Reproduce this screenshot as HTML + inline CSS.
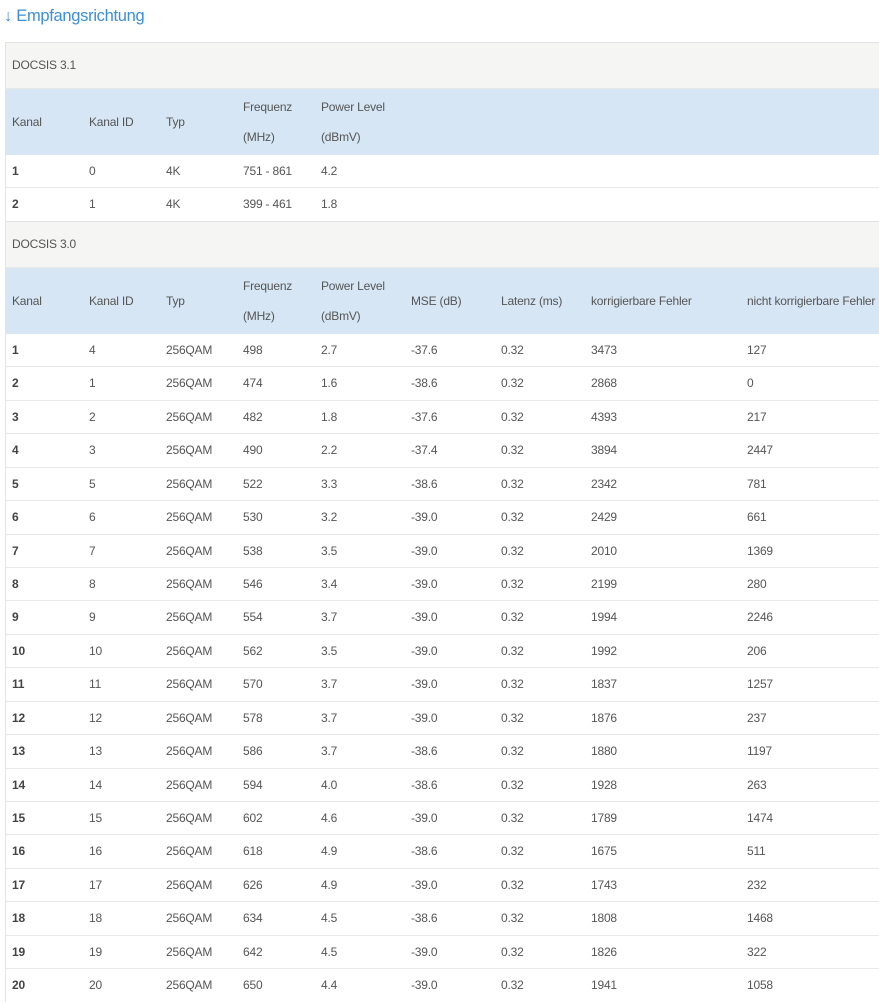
<!DOCTYPE html>
<html><head><meta charset="utf-8"><style>
body{margin:0;background:#fff;font-family:"Liberation Sans",sans-serif;font-size:12px;letter-spacing:-0.2px;color:#555;width:879px;height:999px;overflow:hidden;position:relative}
h2{position:absolute;left:4px;top:7px;margin:0;font-weight:normal;font-size:16.5px;letter-spacing:-0.3px;color:#3a8fd6}
.box{position:absolute;left:5px;top:42px;width:900px;border-left:1px solid #e4e4e4;border-top:1px solid #e4e4e4}
.sec{height:45px;background:#f5f5f3;line-height:45px;padding-left:6px;border-bottom:1px solid #e8e8e6}
.hd{background:#d6e6f4;height:66px;position:relative}
.r{height:32.45px;border-top:1px solid #e8e8e8;position:relative}
.c{position:absolute;top:0;line-height:33px;white-space:nowrap}
.hd .c{line-height:66px}
.hd .c2{line-height:30px;top:3px}
.b{font-weight:bold;color:#444}
.x0{left:6px}.x1{left:83px}.x2{left:160px}.x3{left:237px}.x4{left:315px}.x5{left:405px}.x6{left:495px}.x7{left:585px}.x8{left:741px}
</style></head><body>
<h2>↓ Empfangsrichtung</h2>
<div class="box">
<div class="sec">DOCSIS 3.1</div>
<div class="hd"><span class="c x0">Kanal</span><span class="c x1">Kanal ID</span><span class="c x2">Typ</span><span class="c c2 x3">Frequenz<br>(MHz)</span><span class="c c2 x4">Power Level<br>(dBmV)</span></div>
<div class="r" style="border-top:none"><span class="c x0 b">1</span><span class="c x1">0</span><span class="c x2">4K</span><span class="c x3">751 - 861</span><span class="c x4">4.2</span></div>
<div class="r"><span class="c x0 b">2</span><span class="c x1">1</span><span class="c x2">4K</span><span class="c x3">399 - 461</span><span class="c x4">1.8</span></div>
<div class="sec" style="border-top:1px solid #e4e4e4">DOCSIS 3.0</div>
<div class="hd"><span class="c x0">Kanal</span><span class="c x1">Kanal ID</span><span class="c x2">Typ</span><span class="c c2 x3">Frequenz<br>(MHz)</span><span class="c c2 x4">Power Level<br>(dBmV)</span><span class="c x5">MSE (dB)</span><span class="c x6">Latenz (ms)</span><span class="c x7">korrigierbare Fehler</span><span class="c x8">nicht korrigierbare Fehler</span></div>
<div class="r" style="border-top:none"><span class="c x0 b">1</span><span class="c x1">4</span><span class="c x2">256QAM</span><span class="c x3">498</span><span class="c x4">2.7</span><span class="c x5">-37.6</span><span class="c x6">0.32</span><span class="c x7">3473</span><span class="c x8">127</span></div>
<div class="r"><span class="c x0 b">2</span><span class="c x1">1</span><span class="c x2">256QAM</span><span class="c x3">474</span><span class="c x4">1.6</span><span class="c x5">-38.6</span><span class="c x6">0.32</span><span class="c x7">2868</span><span class="c x8">0</span></div>
<div class="r"><span class="c x0 b">3</span><span class="c x1">2</span><span class="c x2">256QAM</span><span class="c x3">482</span><span class="c x4">1.8</span><span class="c x5">-37.6</span><span class="c x6">0.32</span><span class="c x7">4393</span><span class="c x8">217</span></div>
<div class="r"><span class="c x0 b">4</span><span class="c x1">3</span><span class="c x2">256QAM</span><span class="c x3">490</span><span class="c x4">2.2</span><span class="c x5">-37.4</span><span class="c x6">0.32</span><span class="c x7">3894</span><span class="c x8">2447</span></div>
<div class="r"><span class="c x0 b">5</span><span class="c x1">5</span><span class="c x2">256QAM</span><span class="c x3">522</span><span class="c x4">3.3</span><span class="c x5">-38.6</span><span class="c x6">0.32</span><span class="c x7">2342</span><span class="c x8">781</span></div>
<div class="r"><span class="c x0 b">6</span><span class="c x1">6</span><span class="c x2">256QAM</span><span class="c x3">530</span><span class="c x4">3.2</span><span class="c x5">-39.0</span><span class="c x6">0.32</span><span class="c x7">2429</span><span class="c x8">661</span></div>
<div class="r"><span class="c x0 b">7</span><span class="c x1">7</span><span class="c x2">256QAM</span><span class="c x3">538</span><span class="c x4">3.5</span><span class="c x5">-39.0</span><span class="c x6">0.32</span><span class="c x7">2010</span><span class="c x8">1369</span></div>
<div class="r"><span class="c x0 b">8</span><span class="c x1">8</span><span class="c x2">256QAM</span><span class="c x3">546</span><span class="c x4">3.4</span><span class="c x5">-39.0</span><span class="c x6">0.32</span><span class="c x7">2199</span><span class="c x8">280</span></div>
<div class="r"><span class="c x0 b">9</span><span class="c x1">9</span><span class="c x2">256QAM</span><span class="c x3">554</span><span class="c x4">3.7</span><span class="c x5">-39.0</span><span class="c x6">0.32</span><span class="c x7">1994</span><span class="c x8">2246</span></div>
<div class="r"><span class="c x0 b">10</span><span class="c x1">10</span><span class="c x2">256QAM</span><span class="c x3">562</span><span class="c x4">3.5</span><span class="c x5">-39.0</span><span class="c x6">0.32</span><span class="c x7">1992</span><span class="c x8">206</span></div>
<div class="r"><span class="c x0 b">11</span><span class="c x1">11</span><span class="c x2">256QAM</span><span class="c x3">570</span><span class="c x4">3.7</span><span class="c x5">-39.0</span><span class="c x6">0.32</span><span class="c x7">1837</span><span class="c x8">1257</span></div>
<div class="r"><span class="c x0 b">12</span><span class="c x1">12</span><span class="c x2">256QAM</span><span class="c x3">578</span><span class="c x4">3.7</span><span class="c x5">-39.0</span><span class="c x6">0.32</span><span class="c x7">1876</span><span class="c x8">237</span></div>
<div class="r"><span class="c x0 b">13</span><span class="c x1">13</span><span class="c x2">256QAM</span><span class="c x3">586</span><span class="c x4">3.7</span><span class="c x5">-38.6</span><span class="c x6">0.32</span><span class="c x7">1880</span><span class="c x8">1197</span></div>
<div class="r"><span class="c x0 b">14</span><span class="c x1">14</span><span class="c x2">256QAM</span><span class="c x3">594</span><span class="c x4">4.0</span><span class="c x5">-38.6</span><span class="c x6">0.32</span><span class="c x7">1928</span><span class="c x8">263</span></div>
<div class="r"><span class="c x0 b">15</span><span class="c x1">15</span><span class="c x2">256QAM</span><span class="c x3">602</span><span class="c x4">4.6</span><span class="c x5">-39.0</span><span class="c x6">0.32</span><span class="c x7">1789</span><span class="c x8">1474</span></div>
<div class="r"><span class="c x0 b">16</span><span class="c x1">16</span><span class="c x2">256QAM</span><span class="c x3">618</span><span class="c x4">4.9</span><span class="c x5">-38.6</span><span class="c x6">0.32</span><span class="c x7">1675</span><span class="c x8">511</span></div>
<div class="r"><span class="c x0 b">17</span><span class="c x1">17</span><span class="c x2">256QAM</span><span class="c x3">626</span><span class="c x4">4.9</span><span class="c x5">-39.0</span><span class="c x6">0.32</span><span class="c x7">1743</span><span class="c x8">232</span></div>
<div class="r"><span class="c x0 b">18</span><span class="c x1">18</span><span class="c x2">256QAM</span><span class="c x3">634</span><span class="c x4">4.5</span><span class="c x5">-38.6</span><span class="c x6">0.32</span><span class="c x7">1808</span><span class="c x8">1468</span></div>
<div class="r"><span class="c x0 b">19</span><span class="c x1">19</span><span class="c x2">256QAM</span><span class="c x3">642</span><span class="c x4">4.5</span><span class="c x5">-39.0</span><span class="c x6">0.32</span><span class="c x7">1826</span><span class="c x8">322</span></div>
<div class="r"><span class="c x0 b">20</span><span class="c x1">20</span><span class="c x2">256QAM</span><span class="c x3">650</span><span class="c x4">4.4</span><span class="c x5">-39.0</span><span class="c x6">0.32</span><span class="c x7">1941</span><span class="c x8">1058</span></div>
</div>
</body></html>
